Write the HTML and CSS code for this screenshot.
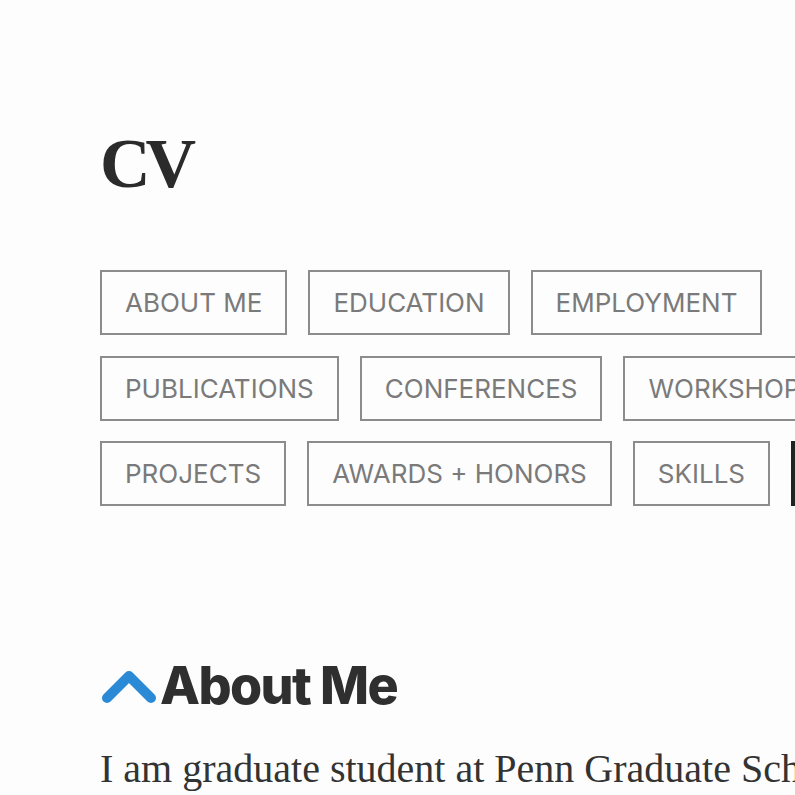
FILE: index.html
```html
<!DOCTYPE html>
<html lang="en">
<head>
<meta charset="utf-8">
<title>CV</title>
<link rel="stylesheet" href="styles.css">
</head>
<body>
<main class="page">
  <h1 class="title">CV</h1>
  <nav class="tabs">
    <div class="tab-row">
      <a class="tab" href="#about">ABOUT ME</a>
      <a class="tab" href="#education">EDUCATION</a>
      <a class="tab" href="#employment">EMPLOYMENT</a>
    </div>
    <div class="tab-row">
      <a class="tab" href="#publications">PUBLICATIONS</a>
      <a class="tab" href="#conferences">CONFERENCES</a>
      <a class="tab" href="#workshops">WORKSHOPS</a>
    </div>
    <div class="tab-row">
      <a class="tab" href="#projects">PROJECTS</a>
      <a class="tab" href="#awards">AWARDS + HONORS</a>
      <a class="tab" href="#skills">SKILLS</a>
      <a class="tab tab-dark" href="#download">DOWNLOAD</a>
    </div>
  </nav>
  <section class="section" id="about">
    <h2 class="section-title">
      <svg class="chev" viewBox="0 0 56 36" width="56" height="36" aria-hidden="true">
        <path d="M6 30 L28 8 L50 30" fill="none" stroke="#2b8ad6" stroke-width="10" stroke-linecap="round" stroke-linejoin="round"/>
      </svg>
      <span>About Me</span>
    </h2>
    <p class="lead">I am graduate student at Penn Graduate School of Education, studying learning sciences and technology.</p>
  </section>
</main>
</body>
</html>
```
FILE: styles.css
```css
html, body {
  margin: 0;
  padding: 0;
  background: #fdfdfd;
  overflow: hidden;
}
.page {
  width: 1000px;
  padding: 0 0 0 100px;
}
.title {
  margin: 0;
  padding-top: 124px;
  font-family: "Liberation Serif", "Times New Roman", serif;
  font-weight: 700;
  font-size: 70px;
  line-height: 80px;
  letter-spacing: -5px;
  color: #2b2b2b;
}
.tabs {
  margin-top: 66px;
  display: flex;
  flex-direction: column;
  gap: 20.5px;
}
.tab-row {
  display: flex;
  gap: 21px;
  white-space: nowrap;
}
.tab {
  display: block;
  box-sizing: border-box;
  height: 65px;
  padding: 0 23px;
  border: 2px solid #8c8c8c;
  font-family: Inter, "Liberation Sans", sans-serif;
  font-size: 26px;
  line-height: 61px;
  color: #7a7a7a;
  text-decoration: none;
}
.tab-dark {
  background: #222;
  border-color: #222;
  color: #fff;
}
.section {
  margin-top: 150px;
}
.section-title {
  margin: 0;
  display: flex;
  align-items: center;
  gap: 3px;
  font-family: Inter, "Liberation Sans", sans-serif;
  font-weight: 800;
  font-size: 52px;
  line-height: 60px;
  letter-spacing: -1.6px;
  color: #2f2f2f;
}
.chev {
  display: block;
  margin-left: 1px;
}
.lead {
  margin: 25px 0 0;
  font-family: "Liberation Serif", "Times New Roman", serif;
  font-size: 40px;
  line-height: 56px;
  color: #333;
}
```
